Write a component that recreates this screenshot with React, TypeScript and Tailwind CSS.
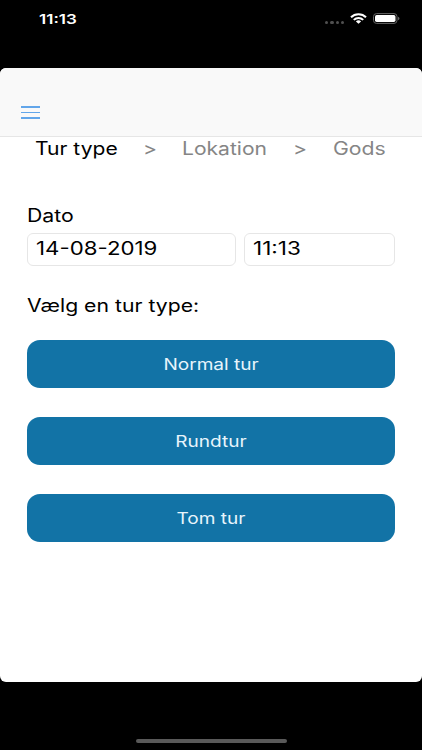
import { useState } from "react";

const steps = ["Tur type", "Lokation", "Gods"];
const tripTypes = ["Normal tur", "Rundtur", "Tom tur"];

function StatusBar() {
  return (
    <div className="flex h-[68px] shrink-0 items-start pl-[39px] pr-[22px] pt-[9px] text-white">
      <span className="origin-left scale-x-[1.26] text-[13.5px] leading-5 font-semibold">11:13</span>
      <div className="ml-auto flex items-center pt-[4px]">
        <div className="mr-[6px] mt-[8px] flex gap-[2px]">
          {[0, 1, 2, 3].map((dot) => (
            <span key={dot} className="h-[3px] w-[3.2px] rounded-full bg-[#505050]" />
          ))}
        </div>
        <svg width="17" height="11" viewBox="0 0 17 11" className="mr-[6px]" fill="none" stroke="white" strokeWidth="2">
          <path d="M1 4.3C5 .1 12 .1 16 4.3" />
          <path d="M3.8 6.9c2.7-2.7 6.7-2.7 9.4 0" />
          <path d="M8.5 10.7 5.9 8.4c1.5-1.4 3.7-1.4 5.2 0z" fill="white" stroke="none" />
        </svg>
        <svg width="27" height="11" viewBox="0 0 27 11">
          <rect x=".5" y=".6" width="23.5" height="9.8" rx="3" fill="none" stroke="#666" />
          <rect x="2" y="2" width="20.5" height="7" rx="1.7" fill="white" />
          <path d="M25 3.7c2 .6 2 3 0 3.6z" fill="#666" />
        </svg>
      </div>
    </div>
  );
}

export default function App() {
  const [date, setDate] = useState("14-08-2019");
  const [time, setTime] = useState("11:13");

  return (
    <div className="flex h-[750px] w-[422px] flex-col overflow-hidden bg-black font-['Inter',sans-serif] text-black">
      <StatusBar />

      <main className="flex h-[614.4px] shrink-0 flex-col overflow-hidden rounded-[6px] bg-white">
        <header className="flex h-[69px] shrink-0 items-start border-b border-[#e6e6e6] bg-[#f9f9f9] pl-[21px] pt-[38px]">
          <button aria-label="Menu" className="flex flex-col gap-[4px]">
            <span className="h-[1.5px] w-[19px] bg-[#62a6ea]" />
            <span className="h-[1.5px] w-[19px] bg-[#62a6ea]" />
            <span className="h-[1.5px] w-[19px] bg-[#62a6ea]" />
          </button>
        </header>

        <nav className="flex h-[24px] shrink-0 items-center pl-[35px] text-[18px] leading-[24px] text-[#858585]">
          <span className="w-[108px] whitespace-nowrap text-black">
            <span className="inline-block origin-left scale-x-[1.17]">{steps[0]}</span>
          </span>
          <span className="w-[39px]">
            <span className="inline-block origin-left scale-x-[1.18]">&gt;</span>
          </span>
          <span className="w-[111px]">
            <span className="inline-block origin-left scale-x-[1.17]">{steps[1]}</span>
          </span>
          <span className="w-[39.5px]">
            <span className="inline-block origin-left scale-x-[1.18]">&gt;</span>
          </span>
          <span className="inline-block origin-left scale-x-[1.18]">{steps[2]}</span>
        </nav>

        <section className="flex flex-col px-[26.7px] pt-[43px] text-[18px]">
          <label className="origin-left scale-x-[1.18] leading-[24px]">Dato</label>
          <div className="mt-[4.5px] flex gap-2">
            <div className="h-[33px] w-[209.3px] overflow-hidden rounded-md border border-[#e6e6e6] pl-[8px]">
              <input
                value={date}
                onChange={(e) => setDate(e.target.value)}
                className="block h-[30px] w-[160px] origin-left scale-x-[1.235] outline-none"
              />
            </div>
            <div className="h-[33px] flex-1 overflow-hidden rounded-md border border-[#e6e6e6] pl-[8.5px]">
              <input
                value={time}
                onChange={(e) => setTime(e.target.value)}
                className="block h-[30px] w-[110px] origin-left scale-x-[1.25] outline-none"
              />
            </div>
          </div>

          <p className="mt-[28.5px] origin-left scale-x-[1.178] leading-[24px]">Vælg en tur type:</p>

          <div className="mt-[22px] flex flex-col gap-[29.5px]">
            {tripTypes.map((type) => (
              <button key={type} className="h-[47.5px] rounded-[13px] bg-[#1273a6] text-[16px] text-[#e8f5fc]">
                <span className="inline-block scale-x-[1.19]">{type}</span>
              </button>
            ))}
          </div>
        </section>
      </main>

      <footer className="flex flex-1 items-end justify-center pb-[7px]">
        <div className="h-[4px] w-[151px] rounded-full bg-[#595959]" />
      </footer>
    </div>
  );
}
